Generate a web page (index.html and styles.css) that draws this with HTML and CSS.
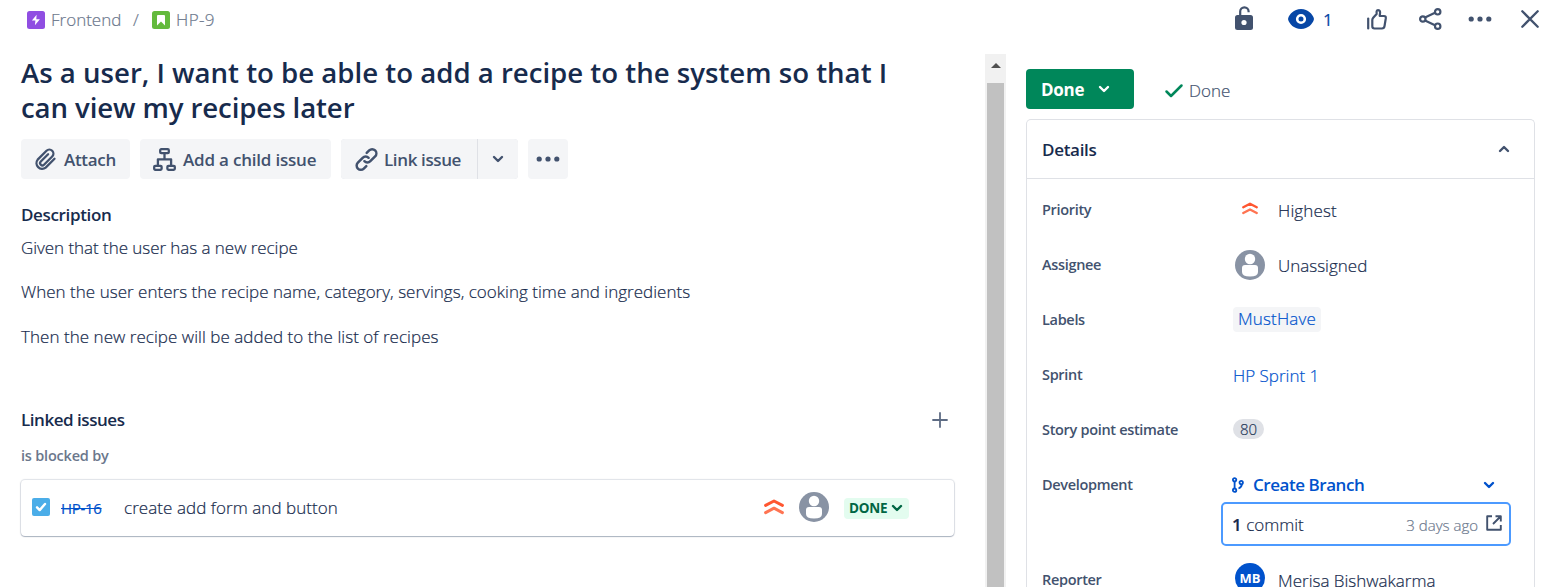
FILE: index.html
```html
<!DOCTYPE html>
<html lang="en">
<head>
<meta charset="utf-8">
<title>HP-9</title>
<link rel="stylesheet" href="styles.css">
</head>
<body>
<svg class="defs" width="0" height="0">
  <symbol id="down" viewBox="0 0 12 12"><path d="M2 4l4 4 4-4" fill="none" stroke="currentColor" stroke-width="2.4" stroke-linecap="round" stroke-linejoin="round"/></symbol>
  <symbol id="highest" viewBox="0 0 20 16"><path d="M1.6 6.400L10 2l8.400 4.400" fill="none" stroke="#FF5630" stroke-width="3" stroke-linecap="round" stroke-linejoin="round"/><path d="M1.600 13.600L10 9.200l8.400 4.400" fill="none" stroke="#FF7452" stroke-width="3" stroke-linecap="round" stroke-linejoin="round"/></symbol>
  <symbol id="person" viewBox="0 0 30 30"><circle cx="15" cy="15" r="15" fill="#8993A4"/><circle cx="15" cy="9" r="5.200" fill="#fff"/><path d="M7 18q0-3 3-3h10q3 0 3 3v4q0 4.500-8 4.500t-8-4.500z" fill="#fff"/></symbol>
  <symbol id="more" viewBox="0 0 24 6"><circle cx="3.200" cy="3" r="2.600" fill="currentColor"/><circle cx="12" cy="3" r="2.600" fill="currentColor"/><circle cx="20.800" cy="3" r="2.600" fill="currentColor"/></symbol>
</svg>
<header class="topbar">
  <nav class="crumbs">
    <svg class="type" viewBox="0 0 18 18"><rect width="18" height="18" rx="2.500" fill="#904EE2"/><path d="M9.600 3.800L4.900 9.600h3.500l-.5 4.600 5-5.900H9.300z" fill="#fff"/></svg>
    <span class="crumb front">Frontend</span>
    <span class="slash">/</span>
    <svg class="type" viewBox="0 0 18 18"><rect width="18" height="18" rx="2.500" fill="#63BA3C"/><path d="M5 5q0-1 1-1h6q1 0 1 1v9.400l-4-4-4 4z" fill="#fff"/></svg>
    <span class="crumb key">HP-9</span>
  </nav>
  <div class="actions">
    <svg class="lock" viewBox="0 0 18 24"><rect y="9" width="18" height="15" rx="2.500" fill="#42526E"/><path d="M5.200 10V5.500a4.200 4.200 0 0 1 8.400 0V6.200" fill="none" stroke="#42526E" stroke-width="2.200"/><circle cx="9" cy="16.500" r="2.600" fill="#fff"/></svg>
    <span class="watch"><svg class="eye" viewBox="0 0 26 20"><path d="M13 0c7.500 0 11.400 5.500 12.600 8.500.5 1 .5 2 0 3C24.400 14.500 20.500 20 13 20S1.600 14.500.4 11.500c-.5-1-.5-2 0-3C1.600 5.500 5.500 0 13 0z" fill="#0747A6"/><circle cx="13" cy="10" r="3.800" fill="none" stroke="#fff" stroke-width="2.600"/></svg><span class="count">1</span></span>
    <svg class="thumb" viewBox="0 0 20 21"><g fill="none" stroke="#42526E" stroke-width="2.200" stroke-linejoin="round" stroke-linecap="round"><path d="M1.200 9.500v10"/><path d="M5.300 11q0-1.200.9-2.200L9.600 5V2.600q0-1.400 1.300-1.400 2.200 0 2.200 2.400L12.700 7h4.200q2.200 0 1.900 2.200l-1.300 8q-.3 2.300-2.600 2.300H7.500q-2.200 0-2.200-2.200z"/></g></svg>
    <svg class="share" viewBox="0 0 23 22"><g fill="none" stroke="#42526E" stroke-width="2.200"><path d="M6 9.500l10-4.800M6 12.500l10 4.800"/><circle cx="3.800" cy="11" r="2.700"/><circle cx="18.700" cy="3.800" r="2.700"/><circle cx="18.700" cy="18.200" r="2.700"/></g></svg>
    <svg class="dots"><use href="#more"/></svg>
    <svg class="close" viewBox="0 0 18 18"><path d="M1.300 1.300l15.400 15.400M16.700 1.300L1.300 16.700" stroke="#42526E" stroke-width="2.300" stroke-linecap="round"/></svg>
  </div>
</header>
<div class="columns">
  <main class="main">
    <h1 class="title"><span class="t1">As a user, I want to be able to add a recipe to the system so that I</span><br><span class="t2">can view my recipes later</span></h1>
    <div class="toolbar">
      <button class="btn attach"><svg class="clip" viewBox="0 0 24 24"><path d="M20.500 11.200l-8.800 8.800a5.700 5.700 0 0 1-8-8L12.500 3.200a4 4 0 0 1 5.700 5.700l-8.200 8.200a2.200 2.200 0 0 1-3.200-3.200l7.300-7.300" transform="translate(0 .6)" fill="none" stroke="currentColor" stroke-width="2.300" stroke-linecap="round"/></svg><span>Attach</span></button>
      <button class="btn child"><svg class="tree" viewBox="0 0 23 23"><g fill="none" stroke="currentColor" stroke-width="2.300" stroke-linejoin="round"><rect x="7.200" y="1.200" width="8.600" height="4" rx="1"/><rect x="1.200" y="17.800" width="7.400" height="4" rx="1"/><rect x="14.400" y="17.800" width="7.400" height="4" rx="1"/><path d="M11.500 5.500v5.800M4.900 17.500v-6.200h13.200v6.200"/></g></svg><span>Add a child issue</span></button>
      <div class="split">
        <button class="btn link"><svg class="chain" viewBox="0 0 24 24"><g fill="none" stroke="currentColor" stroke-width="2.600" stroke-linecap="round"><path d="M9.800 13.800a4.300 4.300 0 0 0 6.200 0l5-5a4.300 4.300 0 0 0-6.200-6.200l-2.600 2.600"/><path d="M14.200 10.200a4.300 4.300 0 0 0-6.200 0l-5 5a4.300 4.300 0 0 0 6.200 6.200l2.600-2.600"/></g></svg><span>Link issue</span></button>
        <button class="btn drop"><svg class="chev"><use href="#down"/></svg></button>
      </div>
      <button class="btn extra"><svg class="dots"><use href="#more"/></svg></button>
    </div>
    <h2 class="heading desc">Description</h2>
    <p class="text p1">Given that the user has a new recipe</p>
    <p class="text p2">When the user enters the recipe name, category, servings, cooking time and ingredients</p>
    <p class="text p3">Then the new recipe will be added to the list of recipes</p>
    <div class="linked-head"><h2 class="heading linked">Linked issues</h2><svg class="plus" viewBox="0 0 16 16"><path d="M8 1v14M1 8h14" stroke="#5E6C84" stroke-width="1.800" stroke-linecap="round"/></svg></div>
    <div class="relation"><span>is blocked by</span></div>
    <div class="card">
      <svg class="type" viewBox="0 0 18 18"><rect width="18" height="18" rx="2" fill="#4BADE8"/><path d="M5 9.300l2.700 2.800L13 6" fill="none" stroke="#fff" stroke-width="2.400" stroke-linecap="round" stroke-linejoin="round"/></svg>
      <span class="issue-key"><s>HP-16</s></span>
      <span class="summary">create add form and button</span>
      <svg class="prio"><use href="#highest"/></svg>
      <svg class="avatar"><use href="#person"/></svg>
      <span class="lozenge"><span>DONE</span><svg class="chev"><use href="#down"/></svg></span>
    </div>
  </main>
  <div class="scroll"><i class="up"></i><div class="thumbbar"></div></div>
  <aside class="side">
    <div class="status">
      <button class="done"><span>Done</span><svg class="chev"><use href="#down"/></svg></button>
      <svg class="tick" viewBox="0 0 18 14"><path d="M1.500 7.500L6 12 16.500 1.500" fill="none" stroke="#00875A" stroke-width="2.500" stroke-linecap="round" stroke-linejoin="round"/></svg>
      <span class="resolution">Done</span>
    </div>
    <section class="panel">
      <div class="panel-head"><span>Details</span><svg class="chev flip"><use href="#down"/></svg></div>
      <div class="row"><span class="label">Priority</span><svg class="prio small" viewBox="0 0 20 16"><use href="#highest"/></svg><span class="value">Highest</span></div>
      <div class="row"><span class="label">Assignee</span><svg class="avatar"><use href="#person"/></svg><span class="value">Unassigned</span></div>
      <div class="row"><span class="label">Labels</span><span class="tag">MustHave</span></div>
      <div class="row"><span class="label">Sprint</span><span class="sprint">HP Sprint 1</span></div>
      <div class="row"><span class="label">Story point estimate</span><span class="badge">80</span></div>
      <div class="row dev"><span class="label">Development</span><div class="devbox">
        <div class="branch"><svg class="fork" viewBox="0 0 12 16"><g fill="none" stroke="#0052CC" stroke-width="1.800"><circle cx="2.600" cy="2.800" r="1.700"/><circle cx="2.600" cy="13.200" r="1.700"/><circle cx="9.200" cy="5.600" r="1.700"/><path d="M2.600 4.500v7M9.800 7.300q0 3-3.300 4.200"/></g></svg><span class="create">Create Branch</span><svg class="chev"><use href="#down"/></svg></div>
        <div class="commit"><span class="commits"><b>1</b> commit</span><span class="ago">3 days ago</span><svg class="ext" viewBox="0 0 16 16"><g fill="none" stroke="#42526E" stroke-width="1.900" stroke-linejoin="round"><path d="M6 1.200H1.200v13.600h13.600V10M9.500 1.200h5.300v5.300M14.500 1.500L7 9"/></g></svg></div>
      </div></div>
      <div class="row reporter"><span class="label">Reporter</span><span class="mb">MB</span><span class="value">Merisa Bishwakarma</span></div>
    </section>
  </aside>
</div>
</body>
</html>
```
FILE: styles.css
```css
* { box-sizing: border-box; margin: 0; padding: 0; }
body { height: 587px; overflow: hidden; background: #fff; color: #172B4D; font-family: "Open Sans", "Noto Sans", sans-serif; font-size: 17px; font-weight: 300; line-height: 24px; -webkit-text-stroke: .2px; display: flex; flex-direction: column; }
svg { flex: none; display: block; overflow: visible; }
.defs { position: absolute; }
button { border: 0; font: inherit; color: inherit; letter-spacing: inherit; }
span { white-space: nowrap; }
h1, h2 { white-space: nowrap; }
.title, .toolbar, .heading, .relation, .lozenge, .done, .label, .panel-head, .branch, .mb { -webkit-text-stroke: 0; }
.chev { width: 12px; height: 12px; }
.type { width: 18px; height: 18px; }
.avatar { width: 30px; height: 30px; }

.topbar { height: 54px; display: flex; justify-content: space-between; align-items: flex-start; padding: 0 16px 0 27px; flex: none; }
.crumbs { display: flex; align-items: center; height: 39px; color: #6B778C; }
.front { margin-left: 6px; width: 82px; }
.slash { width: 19px; }
.key { margin-left: 6px; letter-spacing: .4px; }
.actions { display: flex; align-items: center; height: 38px; color: #42526E; }
.lock { width: 18px; height: 24px; margin: -2px 35px 0 0; }
.watch { display: flex; align-items: center; width: 79px; color: #0747A6; }
.count { font-weight: 400; padding-top: 2px; }
.eye { width: 26px; height: 20px; margin-right: 9px; }
.thumb { width: 20px; height: 21px; margin-right: 32px; }
.share { width: 23px; height: 22px; margin-right: 26px; }
.dots { width: 24px; height: 6px; }
.close { width: 18px; height: 18px; margin-left: 29px; }

.columns { display: flex; flex: 1; min-height: 0; }
.main { width: 985px; flex: none; padding: 1px 30px 0 21px; }
.title { font-size: 27.600px; line-height: 35px; font-weight: 600; }
.t2 { letter-spacing: -.1px; }
.toolbar { display: flex; gap: 10px; margin-top: 14px; color: #42526E; font-weight: 600; letter-spacing: -.3px; }
.btn { height: 40px; background: #F4F5F7; border-radius: 4px; display: flex; align-items: center; padding-left: 13px; }
.btn span, .done span, .panel-head span { padding-top: 2px; }
.attach { width: 109px; }
.child { width: 191px; letter-spacing: -.2px; }
.clip { width: 24px; height: 24px; margin-right: 6px; }
.tree { width: 23px; height: 23px; margin-right: 7px; }
.chain { width: 23px; height: 23px; margin: 0 6px 0 1px; }
.split { display: flex; gap: 1px; background: #DFE1E6; border-radius: 4px; }
.link { width: 136px; border-radius: 4px 0 0 4px; letter-spacing: -.38px; }
.drop { width: 40px; border-radius: 0 4px 4px 0; padding-left: 14px; }
.extra { width: 40px; padding-left: 8px; }
.heading { font-size: 17px; line-height: 24px; font-weight: 600; letter-spacing: -.35px; }
.desc { margin-top: 24px; }
.linked { letter-spacing: -.46px; }
.text { margin-top: 9px; white-space: nowrap; }
.p1 { letter-spacing: -.05px; }
.p2 { margin-top: 20px; letter-spacing: .02px; }
.p3 { margin-top: 21px; letter-spacing: .04px; }
.linked-head { display: flex; justify-content: space-between; align-items: center; margin-top: 59px; padding-right: 7px; }
.plus { width: 16px; height: 16px; }
.relation { margin-top: 12px; font-size: 14.500px; font-weight: 600; letter-spacing: -.2px; color: #6B778C; }
.card { margin: 12px 1px 0 0; height: 56px; border-radius: 4px; box-shadow: 0 1px 1px rgba(9,30,66,.25), 0 0 1px 1px rgba(9,30,66,.13); display: flex; align-items: center; padding-left: 11px; }
.card .type { margin-top: -2px; }
.issue-key { margin-left: 11px; width: 63px; font-size: 15px; font-weight: 400; letter-spacing: -.3px; color: #0052CC; }
.summary { flex: 1; letter-spacing: .06px; }
.prio { width: 20px; height: 16px; margin-top: -2px; }
.card .avatar { margin: -2px 15px 0; }
.lozenge { width: 65px; height: 21px; margin-right: 45px; padding-left: 5px; border-radius: 4px; background: #E3FCEF; color: #006644; font-size: 13.500px; font-weight: 700; letter-spacing: -.2px; display: flex; align-items: center; gap: 4px; }

.scroll { width: 21px; flex: none; background: #F1F1F1; display: flex; flex-direction: column; align-items: center; }
.up { border: 5px solid transparent; border-top: 0; border-bottom: 5px solid #505050; margin: 9px 0 15px; }
.thumbbar { width: 17px; flex: 1; background: #C1C1C1; }

.side { padding: 15px 0 0 20px; display: flex; flex-direction: column; min-height: 0; }
.status { display: flex; align-items: center; height: 40px; flex: none; }
.done { width: 108px; height: 40px; border-radius: 4px; background: #00875A; color: #fff; font-weight: 700; letter-spacing: -.3px; display: flex; align-items: center; padding-left: 15px; gap: 14px; }
.tick { width: 18px; height: 14px; margin: 3px 6px 0 31px; }
.resolution { color: #42526E; padding-top: 4px; }
.panel { width: 509px; flex: 1; min-height: 0; overflow: hidden; margin-top: 10px; border: 1px solid #DFE1E6; border-bottom: 0; border-radius: 5px 5px 0 0; }
.panel-head { height: 59px; border-bottom: 1px solid #DFE1E6; display: flex; align-items: center; justify-content: space-between; padding: 0 24px 0 15px; font-weight: 600; letter-spacing: -.3px; }
.panel-head .chev { color: #42526E; }
.flip { transform: rotate(180deg); }
.row { display: flex; align-items: center; height: 55px; padding: 6px 0 0 15px; }
.label { width: 191px; font-size: 14.500px; font-weight: 600; letter-spacing: -.32px; color: #42526E; flex: none; }
.value, .sprint { padding-top: 2px; }
.prio.small { width: 16px; height: 13px; margin: -2px 0 0 9px; }
.small + .value { margin-left: 20px; letter-spacing: .15px; }
.row .avatar { margin: 0 13px 0 2px; }
.tag { background: #F4F5F7; border-radius: 4px; color: #0052CC; height: 25px; width: 88px; padding-left: 5px; letter-spacing: .15px; }
.sprint { color: #0052CC; }
.badge { background: #DFE1E6; border-radius: 10px; width: 31px; height: 20px; margin-top: -2px; font-size: 15px; line-height: 20px; text-align: center; color: #253858; }
.dev { height: 95px; align-items: flex-start; padding-top: 19px; }
.devbox { width: 290px; margin-left: -12px; }
.branch { display: flex; align-items: center; height: 24px; padding: 0 16px 0 11px; color: #0052CC; font-weight: 600; letter-spacing: -.45px; }
.fork { width: 12px; height: 16px; margin-right: 9px; }
.create { flex: 1; }
.commit { height: 44px; margin-top: 5px; border: 2px solid #4C9AFF; border-radius: 5px; display: flex; align-items: center; padding: 2px 7px 0 9px; }
.commits { flex: 1; }
.commits b { font-weight: 600; }
.ago { font-size: 15px; color: #6B778C; margin-right: 8px; }
.ext { width: 16px; height: 16px; margin-top: -4px; }
.mb { width: 30px; height: 30px; margin: -3px 13px 0 2px; border-radius: 50%; background: #0052CC; color: #fff; font-size: 13px; font-weight: 700; line-height: 30px; text-align: center; }
```
